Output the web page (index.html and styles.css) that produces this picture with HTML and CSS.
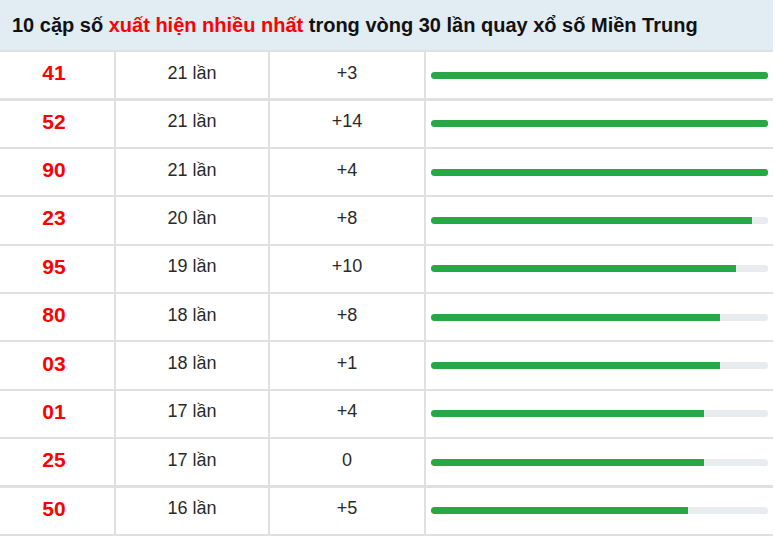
FILE: index.html
```html
<!DOCTYPE html>
<html lang="vi">
<head>
<meta charset="utf-8">
<title>10 cặp số xuất hiện nhiều nhất</title>
<link rel="stylesheet" href="styles.css">
</head>
<body>
<div class="board">
  <div class="head">10 cặp số <span class="hot">xuất hiện nhiều nhất</span> trong vòng 30 lần quay xổ số Miền Trung</div>
  <div class="rows">
    <div class="row"><div class="num">41</div><div class="cnt">21 lần</div><div class="gap">+3</div><div class="barcell"><div class="track"><div class="fill" style="width:100%"></div></div></div></div>
    <div class="row"><div class="num">52</div><div class="cnt">21 lần</div><div class="gap">+14</div><div class="barcell"><div class="track"><div class="fill" style="width:100%"></div></div></div></div>
    <div class="row"><div class="num">90</div><div class="cnt">21 lần</div><div class="gap">+4</div><div class="barcell"><div class="track"><div class="fill" style="width:100%"></div></div></div></div>
    <div class="row"><div class="num">23</div><div class="cnt">20 lần</div><div class="gap">+8</div><div class="barcell"><div class="track"><div class="fill" style="width:95.24%"></div></div></div></div>
    <div class="row"><div class="num">95</div><div class="cnt">19 lần</div><div class="gap">+10</div><div class="barcell"><div class="track"><div class="fill" style="width:90.48%"></div></div></div></div>
    <div class="row"><div class="num">80</div><div class="cnt">18 lần</div><div class="gap">+8</div><div class="barcell"><div class="track"><div class="fill" style="width:85.71%"></div></div></div></div>
    <div class="row"><div class="num">03</div><div class="cnt">18 lần</div><div class="gap">+1</div><div class="barcell"><div class="track"><div class="fill" style="width:85.71%"></div></div></div></div>
    <div class="row"><div class="num">01</div><div class="cnt">17 lần</div><div class="gap">+4</div><div class="barcell"><div class="track"><div class="fill" style="width:80.95%"></div></div></div></div>
    <div class="row"><div class="num">25</div><div class="cnt">17 lần</div><div class="gap">0</div><div class="barcell"><div class="track"><div class="fill" style="width:80.95%"></div></div></div></div>
    <div class="row"><div class="num">50</div><div class="cnt">16 lần</div><div class="gap">+5</div><div class="barcell"><div class="track"><div class="fill" style="width:76.19%"></div></div></div></div>
  </div>
</div>
</body>
</html>
```
FILE: styles.css
```css
html, body {
  margin: 0;
  padding: 0;
  background: #fff;
}
body {
  font-family: "Liberation Sans", Arial, sans-serif;
}
.board {
  width: 773px;
}
.head {
  height: 50px;
  line-height: 50px;
  padding-left: 12px;
  background: #e2ecf3;
  font-size: 20px;
  font-weight: bold;
  color: #111;
  white-space: nowrap;
}
.hot {
  color: #f00;
}
.rows {
  display: flex;
  flex-direction: column;
  gap: 2.2px;
  padding: 2.2px 0;
  background: #e0e0e0;
}
.row {
  display: grid;
  grid-template-columns: 114px 152px 154px 1fr;
  column-gap: 2px;
  height: 46.2px;
}
.row > div {
  background: #fff;
  display: flex;
  align-items: center;
  justify-content: center;
  padding-bottom: 4px;
  box-sizing: border-box;
}
.num {
  color: #f00;
  font-weight: bold;
  font-size: 21px;
  padding-right: 6px;
}
.cnt, .gap {
  color: #2a2a2a;
  font-size: 18px;
}
.row > .barcell {
  padding: 0 5px 0 5px;
  justify-content: stretch;
}
.track {
  width: 100%;
  height: 7px;
  border-radius: 3px;
  background: #e9ecef;
  overflow: hidden;
  display: flex;
}
.fill {
  height: 100%;
  background: #28a745;
  border-radius: 3px 0 0 3px;
}
```
